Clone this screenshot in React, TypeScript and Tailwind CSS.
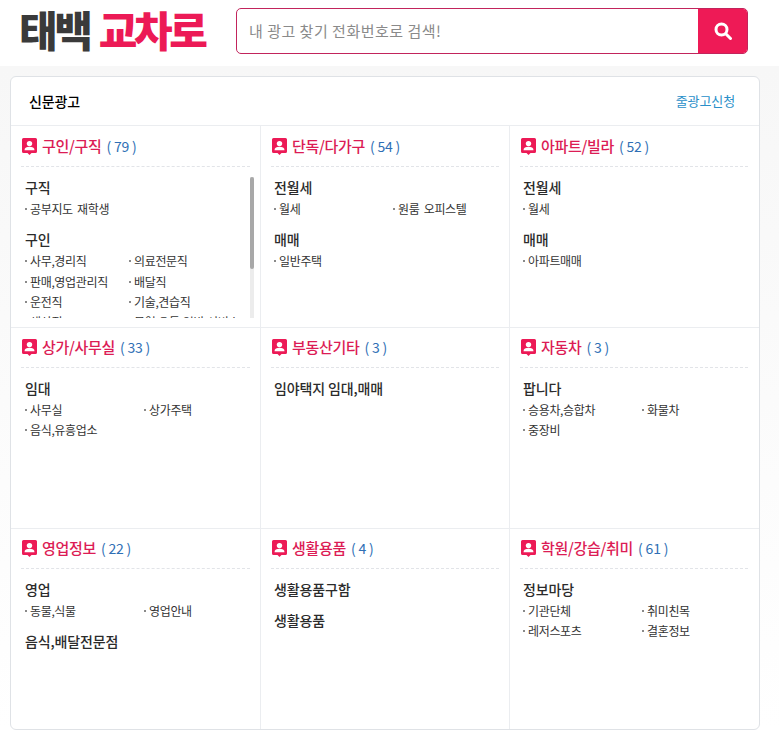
import React from 'react';

const KR = "font-['Noto_Sans_CJK_KR','Noto_Sans',sans-serif]";

type Group = { name: string; items: string[] };
type Section = { title: string; count: number; groups: Group[] };

const sections: Section[] = [
  {
    title: '구인/구직',
    count: 79,
    groups: [
      { name: '구직', items: ['공부지도 재학생'] },
      { name: '구인', items: ['사무,경리직', '의료전문직', '판매,영업관리직', '배달직', '운전직', '기술,견습직', '생산직', '무역,유통,일반,서비스'] },
    ],
  },
  {
    title: '단독/다가구',
    count: 54,
    groups: [
      { name: '전월세', items: ['월세', '원룸 오피스텔'] },
      { name: '매매', items: ['일반주택'] },
    ],
  },
  {
    title: '아파트/빌라',
    count: 52,
    groups: [
      { name: '전월세', items: ['월세'] },
      { name: '매매', items: ['아파트매매'] },
    ],
  },
  { title: '상가/사무실', count: 33, groups: [{ name: '임대', items: ['사무실', '상가주택', '음식,유흥업소'] }] },
  { title: '부동산기타', count: 3, groups: [{ name: '임야택지 임대,매매', items: [] }] },
  { title: '자동차', count: 3, groups: [{ name: '팝니다', items: ['승용차,승합차', '화물차', '중장비'] }] },
  {
    title: '영업정보',
    count: 22,
    groups: [
      { name: '영업', items: ['동물,식물', '영업안내'] },
      { name: '음식,배달전문점', items: [] },
    ],
  },
  {
    title: '생활용품',
    count: 4,
    groups: [
      { name: '생활용품구함', items: [] },
      { name: '생활용품', items: [] },
    ],
  },
  { title: '학원/강습/취미', count: 61, groups: [{ name: '정보마당', items: ['기관단체', '취미친목', '레저스포츠', '결혼정보'] }] },
];

function PinIcon() {
  return (
    <svg width="15" height="17" viewBox="0 0 15 17" className="shrink-0">
      <path d="M1.500 0h12a1.500 1.500 0 0 1 1.500 1.500v12a1.500 1.500 0 0 1-1.500 1.500H9.500L7.500 17 5.500 15H1.500A1.500 1.500 0 0 1 0 13.500V1.500A1.500 1.500 0 0 1 1.500 0z" fill="#ec1a56" />
      <circle cx="7.500" cy="5.600" r="2.700" fill="#fff" />
      <path d="M2.500 12.200c0-2.400 2.200-3.400 5-3.400s5 1 5 3.400z" fill="#fff" />
    </svg>
  );
}

function SectionCell({ section, index }: { section: Section; index: number }) {
  const isFirst = index === 0;
  const endOfRow = index % 3 === 2;
  const row = Math.floor(index / 3);
  const height = row === 0 ? 'h-[202px]' : row === 1 ? 'h-[201px]' : 'h-[200px]';
  return (
    <div className={`${height} flex flex-col ${endOfRow ? '' : 'border-r border-[#ebedf0]'} ${row === 2 ? '' : 'border-b border-[#ebedf0]'}`}>
      <div className={`mx-[10px] ${row === 0 ? 'h-[41px]' : 'h-[40px]'} shrink-0 flex items-center gap-[5px] border-b border-dashed border-[#e2e4e8] pl-[1px] ${endOfRow ? 'mr-[11px]' : ''}`}>
        <PinIcon />
        <span className="text-[15px] font-medium tracking-[-0.3px] text-[#dc1c55]">{section.title}</span>
        <span className="text-[14px] tracking-[-0.2px] text-[#2f6fb5]">( {section.count} )</span>
      </div>
      <div className={`relative flex-1 min-h-0 ${index % 3 === 0 ? 'pl-[14px]' : 'pl-[13px]'} pt-[9px] ${isFirst ? 'overflow-hidden mb-[9px]' : ''}`}>
        {section.groups.map((group) => (
          <div key={group.name} className="mb-[9px]">
            <div className="text-[14px] leading-[22px] mb-[1px] font-medium tracking-[-0.15px] text-[#2b2b2b]">{group.name}</div>
            {group.items.length > 0 && (
              <div className={`grid ${isFirst ? 'grid-cols-[104px_1fr]' : 'grid-cols-[119px_1fr]'}`}>
                {group.items.map((item) => (
                  <div key={item} className="h-[20.300px] flex items-center text-[12px] tracking-[-0.35px] [word-spacing:2px] text-[#333333] whitespace-nowrap">
                    <span className="w-[2px] h-[2px] mr-[3px] bg-[#8a8a8a]" />
                    {item}
                  </div>
                ))}
              </div>
            )}
          </div>
        ))}
        {isFirst && (
          <div className="absolute right-[6px] top-[10px] bottom-0 w-[4px] bg-[#ececec]">
            <div className="h-[92px] w-[4px] rounded-full bg-[#a8a8a8]" />
          </div>
        )}
      </div>
    </div>
  );
}

export default function App() {
  return (
    <div className={`w-[779px] h-[741px] bg-white ${KR}`}>
      <header className="h-[66px] flex items-center">
        <div className="w-[236px] pl-[19px] flex items-center text-[42px] leading-[56px] font-black tracking-[-3.300px] whitespace-nowrap -mt-[9px]">
          <span className="text-[#3a3a3a]">태백</span>
          <span className="text-[#ec1a56] ml-[9px]">교차로</span>
        </div>
        <div className="w-[512px] h-[46px] -mt-[4px] flex rounded-[5px] border border-[#c2245c] overflow-hidden">
          <div className="flex-1 pl-[12px] flex items-center text-[15px] tracking-[0.5px] text-[#8a8a8a]">내 광고 찾기 전화번호로 검색!</div>
          <div className="w-[50px] -my-[1px] -mr-[1px] bg-[#ee1a56] flex items-center justify-center">
            <svg width="18" height="18" viewBox="0 0 18 18" fill="none" stroke="#fff" strokeWidth="3">
              <circle cx="7.500" cy="7.500" r="5.500" />
              <path d="M12 12l4.500 4.500" strokeLinecap="round" />
            </svg>
          </div>
        </div>
      </header>
      <div className="bg-gradient-to-b from-[#f7f7f7] to-white pt-[10px] px-[10px]">
        <div className="w-[750px] h-[654px] rounded-[6px] border border-[#dfe2e6] bg-white">
          <div className="h-[49px] flex items-center justify-between pl-[18px] pr-[24px] border-b border-[#ebedf0]">
            <span className="text-[14px] font-medium tracking-[-0.1px] text-black">신문광고</span>
            <span className="text-[13px] tracking-[-0.1px] text-[#2a8fc9]">줄광고신청</span>
          </div>
          <div className="grid grid-cols-[250px_249px_249px]">
            {sections.map((section, i) => (
              <SectionCell key={section.title} section={section} index={i} />
            ))}
          </div>
        </div>
      </div>
    </div>
  );
}
